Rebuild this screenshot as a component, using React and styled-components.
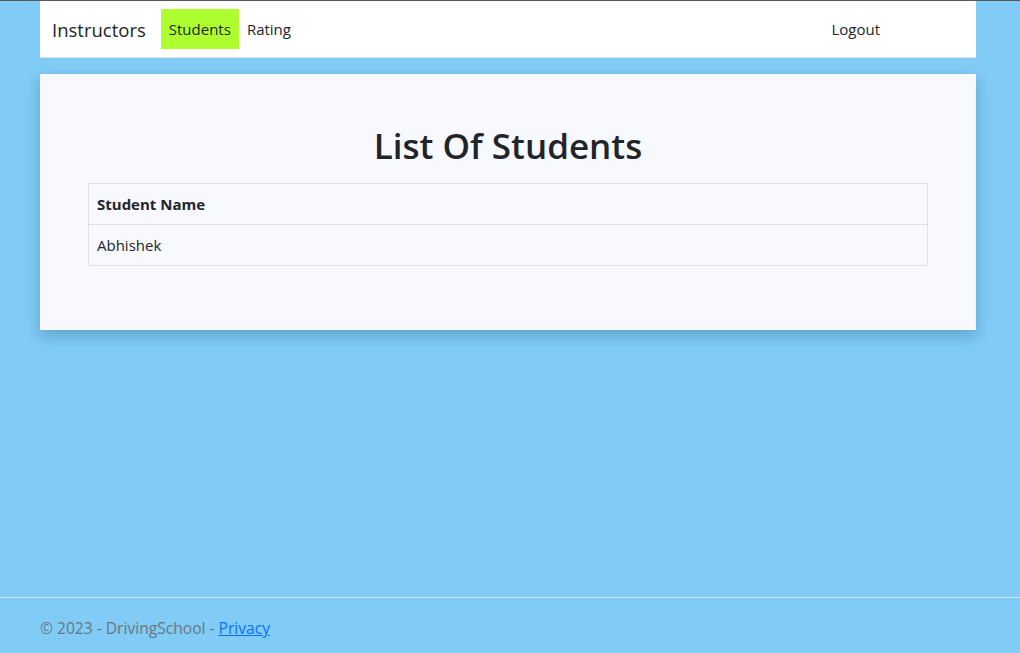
import React from 'react'
import styled, { createGlobalStyle } from 'styled-components'

const GlobalStyle = createGlobalStyle`
html, body {
  margin: 0;
  padding: 0;
  height: 100%;
  overflow: hidden;
}
body {
  background: #80ccf7;
  font-family: "Open Sans", "Noto Sans", sans-serif;
  color: #212529;
  font-size: 16px;
}
#root {
  height: 100%;
}
`

export default function App() {
  return <Page>
    <GlobalStyle />
    <Header>
      <Navbar>
        <Brand href='/'>Instructors</Brand>
        <NavLink href='/students' active>Students</NavLink>
        <NavLink href='/rating'>Rating</NavLink>
        <Spacer />
        <NavLink href='/logout'>Logout</NavLink>
      </Navbar>
    </Header>
    <Main>
      <Card>
        <Title>List Of Students</Title>
        <Table>
          <thead>
            <tr><Th>Student Name</Th></tr>
          </thead>
          <tbody>
            <tr><Td>Abhishek</Td></tr>
          </tbody>
        </Table>
      </Card>
    </Main>
    <Footer>
      <FooterInner>
        © 2023 - DrivingSchool - <FooterLink href='/privacy'>Privacy</FooterLink>
      </FooterInner>
    </Footer>
  </Page>
}

const Page = styled.div`
display: flex;
flex-direction: column;
height: 100%;
border-top: 1px solid #555;
box-sizing: border-box;
`

const Header = styled.header`
padding-left: 40px;
`

const Navbar = styled.nav`
display: flex;
align-items: center;
width: 936px;
height: 57px;
box-sizing: border-box;
background: #fff;
padding: 0 88px 0 12px;
border-bottom: 1px solid #dde6ee;
`

const Brand = styled.a`
font-size: 18.5px;
color: #212529;
text-decoration: none;
margin-right: 15px;
`

const NavLink = styled.a`
display: flex;
align-items: center;
height: 40px;
padding: 0 8px;
font-size: 15px;
color: #212529;
text-decoration: none;
background: ${p => (p.active ? '#adff2f' : 'transparent')};
`

const Spacer = styled.div`
flex: 1;
`

const Main = styled.main`
padding: 16px 0 0 40px;
`

const Card = styled.div`
width: 936px;
box-sizing: border-box;
background: #f8f8ff;
padding: 49px 48px 64px;
box-shadow: 0 6px 14px rgba(40, 90, 130, 0.35);
`

const Title = styled.h1`
margin: 0 0 14px;
text-align: center;
font-size: 35px;
font-weight: 600;
line-height: 1.3;
`

const Table = styled.table`
width: 100%;
border-collapse: collapse;
`

const Th = styled.th`
text-align: left;
font-weight: 700;
font-size: 15px;
padding: 0 8px;
height: 40px;
border: 1px solid #dee2e6;
`

const Td = styled.td`
font-size: 15px;
padding: 0 8px;
height: 40px;
border: 1px solid #dee2e6;
`

const Footer = styled.footer`
margin-top: auto;
height: 55px;
border-top: 1px solid #cdeafc;
`

const FooterInner = styled.div`
padding-left: 40px;
line-height: 60px;
color: #6c757d;
font-size: 15.6px;
`

const FooterLink = styled.a`
color: #0d6efd;
`
